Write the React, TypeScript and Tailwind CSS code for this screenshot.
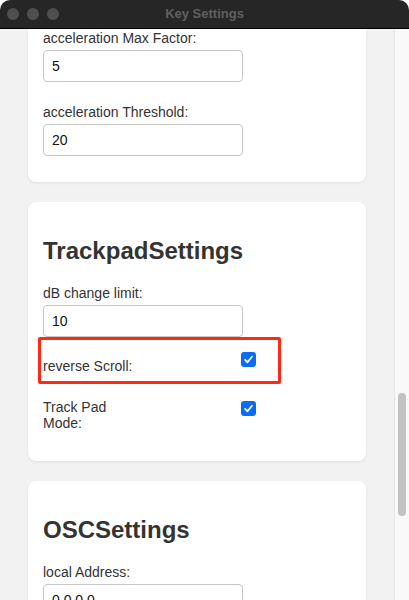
import React from 'react';

const Check = () => (
  <span className="flex h-[15px] w-[15px] items-center justify-center rounded-[3px] bg-[#0b6cf8]">
    <svg width="11" height="11" viewBox="0 0 12 12" fill="none">
      <path d="M2.3 6.4 L4.9 9 L9.8 3" stroke="white" strokeWidth="2" strokeLinecap="round" strokeLinejoin="round" />
    </svg>
  </span>
);

const Field: React.FC<{ label: string; value: string; last?: boolean }> = ({ label, value, last }) => (
  <div className={last ? '' : 'mb-[22px]'}>
    <div className="leading-[16px]">{label}</div>
    <div className="mt-[4px] flex h-[32px] w-[200px] items-center rounded-[4px] border border-[#c6c6c6] bg-white pl-[8px] text-[#111]">
      {value}
    </div>
  </div>
);

export default function App() {
  return (
    <div className="h-[600px] w-[409px] overflow-hidden rounded-t-[10px] bg-[#f2f2f2] font-['Liberation_Sans',Arial,sans-serif] text-[14px] text-[#333]">
      {/* title bar */}
      <div className="relative flex h-[29px] items-center justify-center border-b border-black bg-[#262626]">
        <div className="absolute left-[7px] top-[8px] flex gap-[8px]">
          <span className="h-[12px] w-[12px] rounded-full bg-[#4f4f4f]" />
          <span className="h-[12px] w-[12px] rounded-full bg-[#4f4f4f]" />
          <span className="h-[12px] w-[12px] rounded-full bg-[#4f4f4f]" />
        </div>
        <span className="text-[13px] font-bold text-[#606060]">Key Settings</span>
      </div>

      <div className="flex h-[571px]">
        {/* content */}
        <div className="flex w-[394px] flex-col gap-[20px] overflow-hidden px-[28px]">
          {/* card 1 (scrolled) */}
          <div className="shrink-0 rounded-b-[8px] bg-white pb-[26px] pl-[15px] pt-[1px] shadow-[0_1px_3px_rgba(0,0,0,0.08)]">
            <Field label="acceleration Max Factor:" value="5" />
            <Field label="acceleration Threshold:" value="20" last />
          </div>

          {/* card 2 */}
          <div className="shrink-0 rounded-[8px] bg-white pb-[30px] pl-[15px] pt-[16px] shadow-[0_1px_3px_rgba(0,0,0,0.08)]">
            <h2 className="mb-[20px] mt-[19px] text-[24px] font-bold leading-[28px]">TrackpadSettings</h2>
            <Field label="dB change limit:" value="10" last />
            <div className="relative mt-[15px] flex items-start">
              <div className="w-[96px] pt-[6px] leading-[16px]">reverse Scroll:</div>
              <div className="ml-[102px]">
                <Check />
              </div>
              <div className="pointer-events-none absolute left-[-5px] top-[-15px] h-[47px] w-[243px] rounded-[2px] border-[3px] border-[#ff2a14]" />
            </div>
            <div className="mt-[25px] flex items-start">
              <div className="w-[96px] leading-[16px]">Track Pad Mode:</div>
              <div className="ml-[102px] mt-[2px]">
                <Check />
              </div>
            </div>
          </div>

          {/* card 3 */}
          <div className="shrink-0 rounded-[8px] bg-white pb-[30px] pl-[15px] pt-[16px] shadow-[0_1px_3px_rgba(0,0,0,0.08)]">
            <h2 className="mb-[20px] mt-[19px] text-[24px] font-bold leading-[28px]">OSCSettings</h2>
            <Field label="local Address:" value="0.0.0.0" last />
          </div>
        </div>

        {/* scrollbar */}
        <div className="w-[15px] border-l border-[#e6e6e6] bg-[#f9f9f9] pl-[3px] pt-[364px]">
          <div className="h-[123px] w-[8px] rounded-full bg-[#c2c2c2]" />
        </div>
      </div>
    </div>
  );
}
